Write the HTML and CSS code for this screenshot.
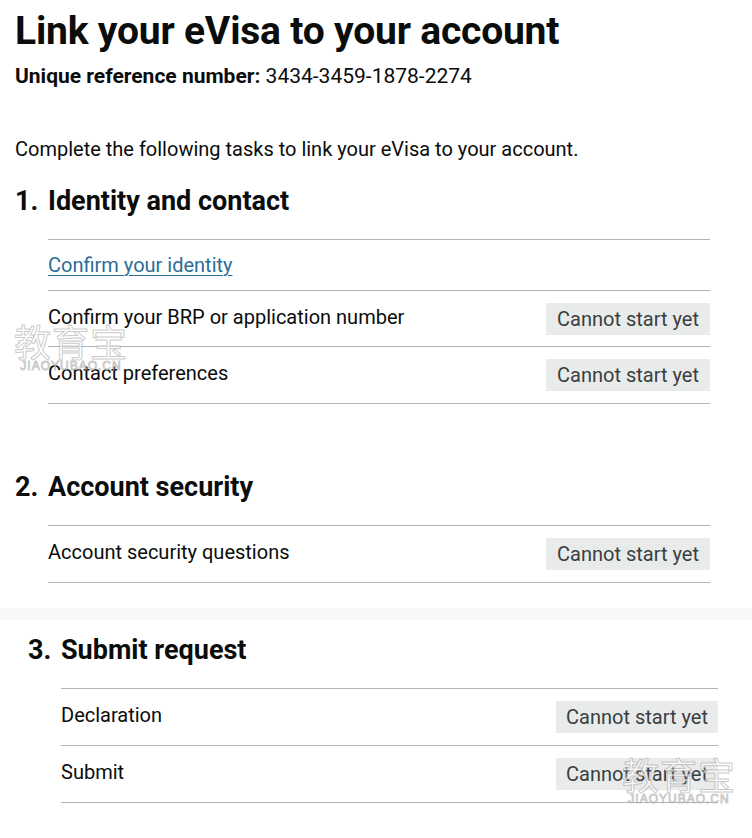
FILE: index.html
```html
<!DOCTYPE html>
<html lang="en">
<head>
<meta charset="utf-8">
<title>Link your eVisa to your account</title>
<link rel="stylesheet" href="styles.css">
</head>
<body>
<main class="panel panel-top">
  <h1 class="title">Link your eVisa to your account</h1>
  <p class="ref"><strong>Unique reference number:</strong> 3434-3459-1878-2274</p>
  <p class="intro">Complete the following tasks to link your eVisa to your account.</p>

  <section class="group">
    <h2 class="group-title"><span class="num">1.</span>Identity and contact</h2>
    <ul class="tasks">
      <li class="task task-link"><a href="#" class="link">Confirm your identity</a></li>
      <li class="task"><span class="name">Confirm your BRP or application number</span><strong class="tag">Cannot start yet</strong></li>
      <li class="task"><span class="name">Contact preferences</span><strong class="tag">Cannot start yet</strong></li>
    </ul>
  </section>

  <section class="group group-2">
    <h2 class="group-title"><span class="num">2.</span>Account security</h2>
    <ul class="tasks">
      <li class="task"><span class="name">Account security questions</span><strong class="tag">Cannot start yet</strong></li>
    </ul>
  </section>
</main>
<div class="band"></div>
<div class="panel panel-bottom">
  <section class="group">
    <h2 class="group-title"><span class="num">3.</span>Submit request</h2>
    <ul class="tasks">
      <li class="task"><span class="name">Declaration</span><strong class="tag">Cannot start yet</strong></li>
      <li class="task"><span class="name">Submit</span><strong class="tag">Cannot start yet</strong></li>
    </ul>
  </section>
</div>
<div class="wm wm-1"><span class="wm-cn">教育宝</span><span class="wm-en">JIAOYUBAO.CN</span></div>
<div class="wm wm-2"><span class="wm-cn">教育宝</span><span class="wm-en">JIAOYUBAO.CN</span></div>
</body>
</html>
```
FILE: styles.css
```css
* { box-sizing: border-box; }
html, body { margin: 0; padding: 0; background: #fff; }
body {
  font-family: Roboto, "Liberation Sans", sans-serif;
  color: #0b0c0c;
  width: 752px;
  height: 838px;
  overflow: hidden;
  position: relative;
}
.panel-top { padding: 6px 42px 0 15px; height: 608px; }
.band { height: 12px; background: #f7f7f7; }
.panel-bottom { padding: 14px 34px 0 28px; }

.title {
  margin: 0;
  font-size: 39px;
  line-height: 50px;
  font-weight: 700;
  letter-spacing: -0.2px;
}
.ref {
  margin: 6px 0 0;
  font-size: 21px;
  line-height: 28px;
}
.ref strong { font-weight: 700; }
.intro {
  margin: 45px 0 0;
  font-size: 20px;
  line-height: 28px;
}
.group { margin: 0; }
.group-title {
  margin: 22px 0 0;
  font-size: 27px;
  line-height: 32px;
  font-weight: 700;
  display: flex;
}
.group-2 .group-title { margin-top: 67px; }
.panel-bottom .group-title { margin-top: 0; }
.num { width: 33px; flex: none; }
.tasks {
  list-style: none;
  margin: 22px 0 0 33px;
  padding: 0;
  border-top: 1px solid #b1b4b6;
}
.task {
  display: flex;
  justify-content: space-between;
  align-items: center;
  border-bottom: 1px solid #b1b4b6;
  min-height: 57px;
  padding: 0;
  font-size: 20px;
  line-height: 28px;
}
.task-link { min-height: 51px; }
.task-link + .task { min-height: 56px; }
.name { padding-bottom: 4px; }
.link {
  color: #2b6e98;
  text-decoration: underline;
  text-underline-offset: 3px;
  text-decoration-thickness: 1px;
}
.tag {
  font-weight: 400;
  background: #e9eaea;
  color: #383f43;
  font-size: 20px;
  line-height: 32px;
  padding: 0;
  width: 164px;
  text-align: center;
  white-space: nowrap;
}
.panel-bottom .tag { width: 162px; }

.wm {
  position: absolute;
  display: flex;
  flex-direction: column;
  align-items: center;
  pointer-events: none;
  color: rgba(255,255,255,0.6);
  -webkit-text-stroke: 1px rgba(150,150,150,0.5);
}
.wm-cn {
  font-family: "Noto Sans CJK SC", sans-serif;
  font-size: 37px;
  line-height: 38px;
  letter-spacing: 1px;
}
.wm-en {
  font-family: "Liberation Sans", sans-serif;
  font-size: 12px;
  line-height: 12px;
  letter-spacing: 1px;
}
.wm-1 { left: 14px; top: 322px; }
.wm-2 { left: 622px; top: 755px; }
```
